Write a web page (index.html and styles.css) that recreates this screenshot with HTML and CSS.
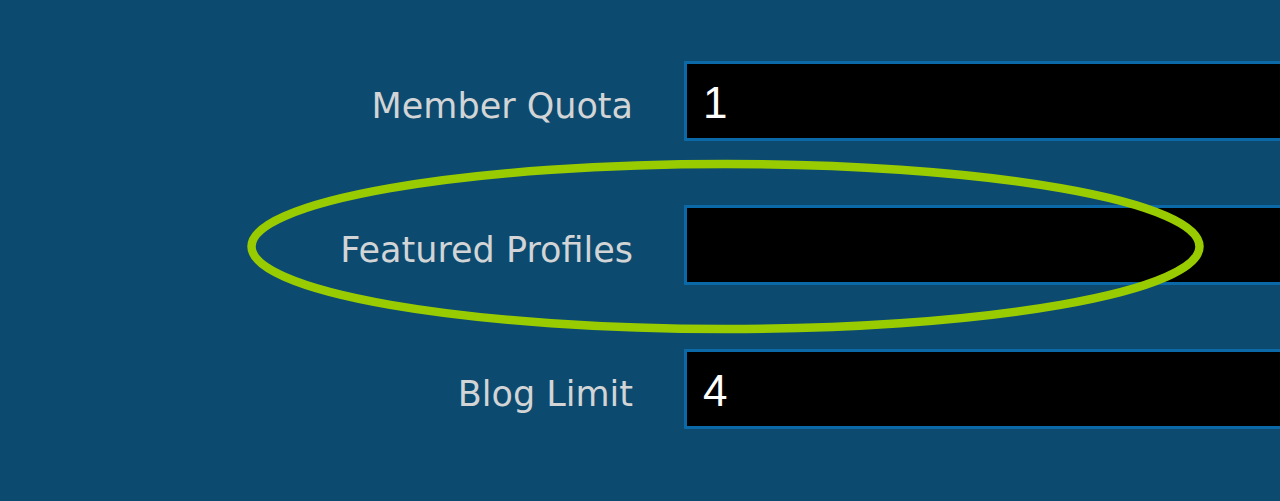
FILE: index.html
```html
<!DOCTYPE html>
<html>
  <head>
    <meta charset="utf-8">
    <title>Member settings</title>
    <link rel="stylesheet" href="styles.css">
  </head>
  <body>
    <div class="container">
      <form class="settings">
        <label class="field-label" for="memberQuota">Member Quota</label>
        <input class="field-input" id="memberQuota" type="text" value="1" />

        <label class="field-label" for="featuredProfiles">Featured Profiles</label>
        <input class="field-input" id="featuredProfiles" type="text" value="" />

        <label class="field-label" for="blogLimit">Blog Limit</label>
        <input class="field-input" id="blogLimit" type="text" value="4" />
      </form>

      <svg class="highlight" width="1280" height="501" viewBox="0 0 1280 501">
        <ellipse cx="725.5" cy="246.5" rx="474" ry="82.5" fill="none" stroke="#99cc00" stroke-width="8.5" />
      </svg>
    </div>
  </body>
</html>
```

FILE: styles.css
```css
html {
  margin: 0;
  padding: 0;
}
body {
  --bg-color: #0c4b6f;
  --border-color: #0a69a6;
  --label-color: #d2d4d6;
  --input-bg: #000;
  --input-color: #fff;
  margin: 0;
  padding: 0;
  background: var(--bg-color);
  overflow: hidden;
  height: 501px;
}

.container {
  position: relative;
  height: 100%;
  overflow: hidden;
}

.settings {
  display: grid;
  grid-template-columns: 633px 1fr;
  column-gap: 51px;
  row-gap: 64px;
  padding-top: 61px;
  margin: 0;
}

.field-label {
  display: flex;
  align-items: center;
  justify-content: flex-end;
  height: 80px;
  padding-top: 9px;
  box-sizing: border-box;
  font-family: "DejaVu Sans", Verdana, sans-serif;
  font-size: 35px;
  color: var(--label-color);
}

.field-input {
  box-sizing: border-box;
  height: 80px;
  width: calc(100% + 20px);
  margin: 0;
  padding: 4px 0 0 16px;
  border: 3px solid var(--border-color);
  border-radius: 0;
  background: var(--input-bg);
  color: var(--input-color);
  font-family: "Liberation Sans", Arial, sans-serif;
  font-size: 44px;
  outline: none;
}

.highlight {
  position: absolute;
  left: 0;
  top: 0;
  pointer-events: none;
}
```
